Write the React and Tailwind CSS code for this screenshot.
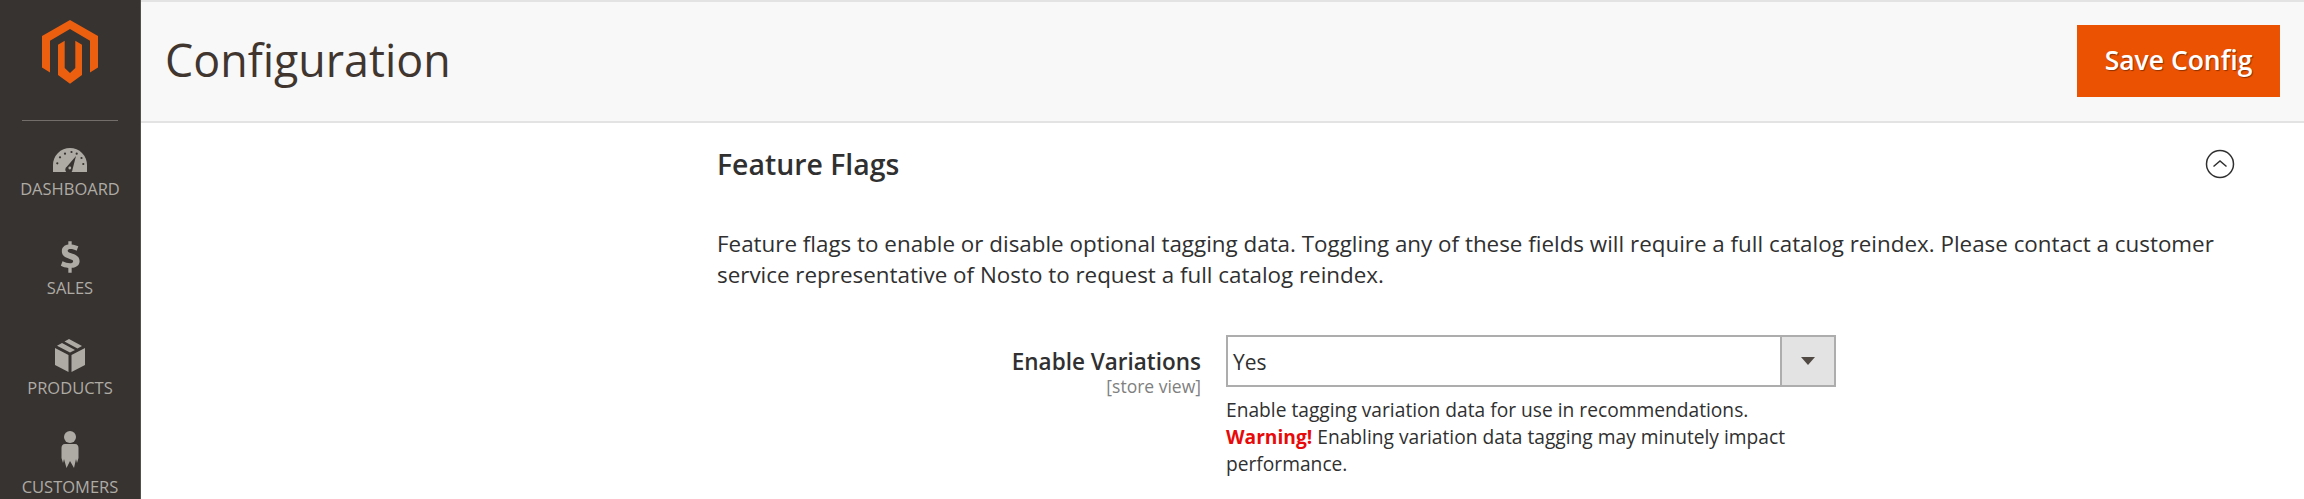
import React from 'react';

const font = { fontFamily: '"Open Sans", sans-serif' };

function Logo() {
  return (
    <svg viewBox="0 0 56 64" className="h-16 w-14">
      <path
        fill="#eb5f0f"
        d="M28 0 56 16V47.500L48 52.500V20.700L28 9 8 20.700V52.500L0 47.500V16Z M16 24.700 22.700 20.700V48L28 53 33.300 48V20.700L40 24.700V55L28 63.700 16 55Z"
      />
    </svg>
  );
}

function Gauge() {
  const dots = [
    [4.3, 15.3],
    [7, 9.3],
    [12, 5.7],
    [18.5, 4],
    [23.7, 5.7],
    [28.5, 10],
    [30.3, 16],
  ];
  return (
    <svg viewBox="0 0 34 24" className="h-6 w-[34px]">
      <path fill="#aeaba5" d="M0 24V17A17 17 0 0 1 34 17V24Z" />
      {dots.map(([cx, cy]) => (
        <circle key={cx} cx={cx} cy={cy} r="1.100" fill="#373330" />
      ))}
      <path fill="#373330" d="M23 8 19.500 21.500A3.600 3.600 0 1 1 14 18.500Z" />
      <circle cx="16.800" cy="20" r="1.400" fill="#aeaba5" />
    </svg>
  );
}

function Dollar() {
  return (
    <svg viewBox="0 0 24 38" className="h-8 w-5">
      <path
        fill="#aeaba5"
        d="M10 0h4v4c3 .3 5.500 1 8 2.200l-2 5.300c-2.500-1.200-5-2-7.500-2-2 0-3.300.7-3.300 2 0 4 14.300 2.500 14.300 12.500 0 4.500-3.500 7.500-9.500 8V38h-4v-5.900c-3.500-.3-6.500-1.100-9-2.500l2-5.500c3 1.500 6 2.400 9 2.400 2.300 0 3.700-.8 3.700-2.200C16.700 20.500 2.200 22 2.200 12c0-4.300 3-7.300 7.800-7.900Z"
      />
    </svg>
  );
}

function Box() {
  return (
    <svg viewBox="0 0 30 33" className="h-[33px] w-[30px]">
      <path
        fill="#aeaba5"
        d="M14 0 27 7 22.500 9.500 9.500 2.500ZM7 4 20 11 15 13.500 2 6.800ZM0 9 13.500 16V33L0 26ZM30 9V26L16.500 33V16Z"
      />
    </svg>
  );
}

function Person() {
  return (
    <svg viewBox="0 0 18 37" className="h-[37px] w-[18px]">
      <circle cx="9" cy="6" r="6" fill="#aeaba5" />
      <path
        fill="#aeaba5"
        d="M4 13H14C16.500 13 17.500 15 17.500 17V27L16 32 15 28 13 37 9 30 5.500 37 3 28 2 32 .5 27V17C.5 15 1.500 13 4 13Z"
      />
    </svg>
  );
}

const navItems = [
  { label: 'DASHBOARD', icon: Gauge, top: 'mt-[27px]', gap: 'mt-[6px]' },
  { label: 'SALES', icon: Dollar, top: 'mt-[41px]', gap: 'mt-1' },
  { label: 'PRODUCTS', icon: Box, top: 'mt-10', gap: 'mt-[5px]' },
  { label: 'CUSTOMERS', icon: Person, top: 'mt-8', gap: 'mt-2' },
];

export default function App() {
  return (
    <div className="flex h-[499px] overflow-hidden bg-white" style={font}>
      <aside className="flex w-[141px] shrink-0 flex-col items-center overflow-hidden border-r border-[#555049] bg-[#373330]">
        <div className="mt-5 shrink-0">
          <Logo />
        </div>
        <div className="mt-9 h-px w-24 shrink-0 bg-[#736e69]" />
        <nav className="flex flex-col items-center">
          {navItems.map((item) => {
            const Icon = item.icon;
            return (
              <div key={item.label} className={`flex flex-col items-center ${item.top}`}>
                <Icon />
                <span className={`${item.gap} text-[16.500px] leading-[22px] text-[#aeaba5]`}>{item.label}</span>
              </div>
            );
          })}
        </nav>
      </aside>

      <div className="flex min-w-0 flex-1 flex-col">
        <header className="flex h-[123px] shrink-0 items-center justify-between border-t-2 border-b-2 border-[#e3e3e3] bg-[#f8f8f8] pr-6 pb-px pl-6">
          <h1 className="mb-[2px] text-[44.800px] leading-none font-normal text-[#41362f]">Configuration</h1>
          <button className="flex h-[72px] w-[203px] items-center justify-center bg-[#eb5202] text-[26.500px] font-semibold text-white [text-shadow:1px_1px_1px_rgba(0,0,0,0.4)]">
            Save Config
          </button>
        </header>

        <main className="ml-[576px] w-[1527px] text-[#303030]">
          <div className="mt-[23px] flex items-center justify-between">
            <h2 className="text-[28.400px] leading-9 font-semibold">Feature Flags</h2>
            <svg viewBox="0 0 30 30" className="mr-[9px] h-[30px] w-[30px]" fill="none" stroke="#303030">
              <circle cx="15" cy="15" r="13.500" strokeWidth="1.500" />
              <path d="M8.500 17.500 15 12 21.500 17.500" strokeWidth="1.500" />
            </svg>
          </div>
          <p className="mt-[46px] text-[22.400px] leading-[31px]">
            Feature flags to enable or disable optional tagging data. Toggling any of these fields will require a full catalog reindex. Please contact a customer service representative of Nosto to request a full catalog reindex.
          </p>
          <div className="mt-[45px] flex">
            <div className="w-[484px] pt-[11px] text-right">
              <div className="text-[22.500px] leading-8 font-semibold">Enable Variations</div>
              <div className="text-[17.500px] leading-[17px] text-[#808080]">[store view]</div>
            </div>
            <div className="ml-[25px] w-[610px]">
              <div className="flex h-[52px] items-center justify-between border-2 border-[#adadad]">
                <span className="pt-[3px] pl-[5px] text-[21px]">Yes</span>
                <div className="flex h-full w-[54px] items-center justify-center border-l-2 border-[#adadad] bg-[#e3e3e3]">
                  <span className="h-0 w-0 border-x-[7px] border-t-[8px] border-x-transparent border-t-[#514943]" />
                </div>
              </div>
              <p className="mt-[9px] text-[19.200px] leading-[27px]">
                Enable tagging variation data for use in recommendations.
                <br />
                <strong className="font-bold text-[#e80a0a]">Warning!</strong> Enabling variation data tagging may minutely impact performance.
              </p>
            </div>
          </div>
        </main>
      </div>
    </div>
  );
}
